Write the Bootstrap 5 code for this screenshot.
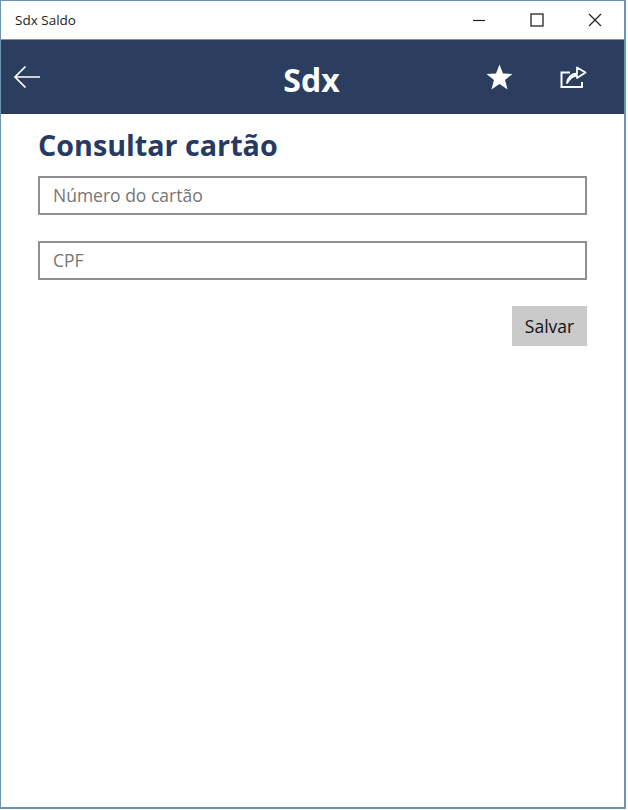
<!DOCTYPE html>
<html lang="pt-BR">

<head>
    <meta charset="UTF-8">
    <title>Sdx Saldo</title>
    <link href="https://cdn.jsdelivr.net/npm/bootstrap@5.3.3/dist/css/bootstrap.min.css" rel="stylesheet">
    <style>
        body {
            background-color: #fff;
            font-family: "Open Sans", "Noto Sans", sans-serif;
            margin: 0;
        }

        .app-window {
            width: 626px;
            height: 809px;
            border: 1px solid #6f94b3;
            border-width: 1px 2px 2px 1px;
            background-color: #fff;
        }

        .title-bar {
            height: 38px;
            padding-left: 14px;
            font-size: 13.500px;
            color: #222;
        }

        .win-btn {
            width: 58px;
            height: 38px;
        }

        .app-header {
            height: 75px;
            background-color: #2c3e5f;
            border-top: 1px solid #7f93ab;
            color: #fff;
        }

        .app-title {
            left: 0;
            right: 0;
            font-size: 32px;
            font-weight: 700;
            line-height: 1;
            text-align: center;
            padding-top: 5px;
            padding-right: 2px;
        }

        .back-btn {
            margin-left: 12px;
        }

        .star-btn {
            margin-right: 47px;
        }

        .share-btn {
            margin-right: 37px;
        }

        .page-body {
            padding: 12px 37px 0 37px;
        }

        .page-title {
            font-size: 28.700px;
            font-weight: 700;
            color: #263a63;
            line-height: 38px;
            margin-bottom: 12px;
        }

        .form-control.field-box {
            height: 39px;
            border: 2px solid #8f8f8f;
            border-radius: 0;
            padding: 0 13px 2px;
            font-size: 17.500px;
            margin-bottom: 26px;
        }

        .form-control.field-box::placeholder {
            color: #767676;
        }

        .save-btn {
            width: 75px;
            height: 40px;
            background-color: #cacaca;
            border: 0;
            border-radius: 0;
            padding: 0;
            font-size: 17.500px;
            color: #111;
        }
    </style>
</head>

<body>

    <div class="app-window d-flex flex-column">
        <div class="title-bar d-flex align-items-center justify-content-between">
            <span>Sdx Saldo</span>
            <div class="d-flex">
                <div class="win-btn d-flex align-items-center justify-content-center">
                    <svg width="14" height="14" viewBox="0 0 14 14"><path d="M1 7.500H13" stroke="#222" stroke-width="1.200" fill="none" /></svg>
                </div>
                <div class="win-btn d-flex align-items-center justify-content-center">
                    <svg width="14" height="14" viewBox="0 0 14 14"><rect x="1" y="1" width="12" height="12" stroke="#222" stroke-width="1.300" fill="none" /></svg>
                </div>
                <div class="win-btn d-flex align-items-center justify-content-center">
                    <svg width="14" height="14" viewBox="0 0 14 14"><path d="M1 1L13 13M13 1L1 13" stroke="#222" stroke-width="1.200" fill="none" /></svg>
                </div>
            </div>
        </div>

        <div class="app-header position-relative d-flex align-items-center">
            <div class="app-title position-absolute">Sdx</div>
            <svg class="back-btn" width="28" height="24" viewBox="0 0 28 24"><path d="M27 12H2M12.500 1.500L2 12L12.500 22.500" stroke="#fff" stroke-width="1.700" fill="none" /></svg>
            <div class="ms-auto d-flex align-items-center">
                <svg class="star-btn" width="27" height="26" viewBox="0 0 27 26"><path d="M13.500 0.500L17 9.500L26.500 10L19 16L21.600 25.500L13.500 20L5.400 25.500L8 16L0.500 10L10 9.500Z" fill="#fff" /></svg>
                <svg class="share-btn" width="27" height="24" viewBox="0 0 27 24"><path d="M10 7.500H1.500V22H22V17" stroke="#fff" stroke-width="2" fill="none" /><path d="M7 18C8 12 12 8.500 17 8.500V2.500L25.500 7.500L17 13V10.500C13 10.500 10 13 7 18Z" stroke="#fff" stroke-width="1.800" fill="none" stroke-linejoin="round" /></svg>
            </div>
        </div>

        <div class="page-body">
            <h1 class="page-title">Consultar cartão</h1>
            <input type="text" class="form-control field-box" placeholder="Número do cartão">
            <input type="text" class="form-control field-box" placeholder="CPF">
            <div class="d-flex justify-content-end">
                <button class="btn save-btn">Salvar</button>
            </div>
        </div>
    </div>

    <script src="https://cdn.jsdelivr.net/npm/bootstrap@5.3.3/dist/js/bootstrap.bundle.min.js"></script>
</body>

</html>
